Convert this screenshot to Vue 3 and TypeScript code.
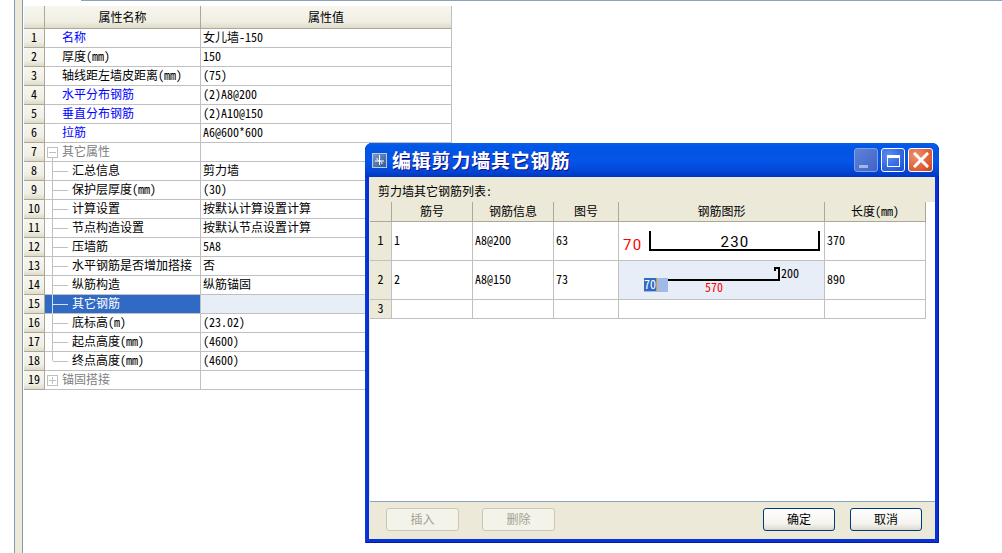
<script setup lang="ts">
interface PropRow {
  name: string
  value: string
  kind?: 'link' | 'group' | 'child'
  collapsed?: boolean
  last?: boolean
  selected?: boolean
}

const rows: PropRow[] = [
  { name: '名称', value: '女儿墙-150', kind: 'link' },
  { name: '厚度(mm)', value: '150' },
  { name: '轴线距左墙皮距离(mm)', value: '(75)' },
  { name: '水平分布钢筋', value: '(2)A8@200', kind: 'link' },
  { name: '垂直分布钢筋', value: '(2)A10@150', kind: 'link' },
  { name: '拉筋', value: 'A6@600*600', kind: 'link' },
  { name: '其它属性', value: '', kind: 'group' },
  { name: '汇总信息', value: '剪力墙', kind: 'child' },
  { name: '保护层厚度(mm)', value: '(30)', kind: 'child' },
  { name: '计算设置', value: '按默认计算设置计算', kind: 'child' },
  { name: '节点构造设置', value: '按默认节点设置计算', kind: 'child' },
  { name: '压墙筋', value: '5A8', kind: 'child' },
  { name: '水平钢筋是否增加搭接', value: '否', kind: 'child' },
  { name: '纵筋构造', value: '纵筋锚固', kind: 'child' },
  { name: '其它钢筋', value: '', kind: 'child', selected: true },
  { name: '底标高(m)', value: '(23.02)', kind: 'child' },
  { name: '起点高度(mm)', value: '(4600)', kind: 'child' },
  { name: '终点高度(mm)', value: '(4600)', kind: 'child', last: true },
  { name: '锚固搭接', value: '', kind: 'group', collapsed: true },
]

const barHeads = ['筋号', '钢筋信息', '图号', '钢筋图形', '长度(mm)']
</script>

<template>
  <div class="page">
    <div class="top-rule" />
    <div class="rail" />

    <section class="props">
      <div class="prop-row prop-head">
        <div class="corner" />
        <div class="head-cell">属性名称</div>
        <div class="head-cell">属性值</div>
      </div>
      <div v-for="(row, i) in rows" :key="i" class="prop-row">
        <div class="index">{{ i + 1 }}</div>
        <div class="name" :class="[row.kind, { selected: row.selected }]">
          <template v-if="row.kind === 'child'">
            <i class="tree-v" :class="{ short: row.last }" />
            <i class="tree-h" />
          </template>
          <svg v-if="row.kind === 'group'" class="toggle" width="11" height="11" viewBox="0 0 11 11">
            <rect x="0.5" y="0.5" width="10" height="10" fill="#fff" stroke="#c0c0c0" />
            <path d="M2 5.5h7" stroke="#c0c0c0" />
            <path v-if="row.collapsed" d="M5.5 2v7" stroke="#c0c0c0" />
          </svg>
          <i v-if="row.kind === 'group' && !row.collapsed" class="tree-stem" />
          <span>{{ row.name }}</span>
        </div>
        <div class="value" :class="{ selected: row.selected }">{{ row.value }}</div>
      </div>
    </section>

    <section class="dialog">
      <header class="titlebar">
        <svg class="app-icon" width="15" height="15" viewBox="0 0 15 15">
          <defs>
            <linearGradient id="icon-fill" x1="0" y1="0" x2="1" y2="1">
              <stop offset="0" stop-color="#7f9cc8" />
              <stop offset="1" stop-color="#2f5596" />
            </linearGradient>
          </defs>
          <rect x="0.5" y="0.5" width="14" height="14" fill="url(#icon-fill)" stroke="#b9cbe6" />
          <path d="M7.5 2v10M3 8h9M5 5c0 2 1 3 2.5 3M10 11c0-2-1-3-2.5-3" fill="none" stroke="#fff" />
        </svg>
        <h1>编辑剪力墙其它钢筋</h1>
        <div class="win-buttons">
          <button class="win-btn off" type="button"><i class="glyph-min" /></button>
          <button class="win-btn" type="button"><i class="glyph-max" /></button>
          <button class="win-btn close" type="button">
            <svg width="16" height="16" viewBox="0 0 16 16">
              <path d="M2 2l12 12M14 2L2 14" stroke="#fff" stroke-width="3" stroke-linecap="square" />
            </svg>
          </button>
        </div>
      </header>

      <div class="client">
        <div class="caption">剪力墙其它钢筋列表:</div>

        <div class="bars">
          <div class="bar-row bar-head">
            <div />
            <div v-for="head in barHeads" :key="head">{{ head }}</div>
          </div>

          <div class="bar-row tall">
            <div class="bar-index">1</div>
            <div class="bar-cell">1</div>
            <div class="bar-cell">A8@200</div>
            <div class="bar-cell">63</div>
            <div class="shape">
              <svg width="205" height="38" viewBox="0 0 205 38">
                <text class="sketch" x="4" y="28" fill="#f00">70</text>
                <path d="M31 9v19h169V9" fill="none" stroke="#000" stroke-width="2" />
                <text class="sketch center" x="116" y="25" fill="#000">230</text>
              </svg>
            </div>
            <div class="bar-cell">370</div>
          </div>

          <div class="bar-row tall">
            <div class="bar-index">2</div>
            <div class="bar-cell">2</div>
            <div class="bar-cell">A8@150</div>
            <div class="bar-cell">73</div>
            <div class="shape active">
              <svg width="205" height="38" viewBox="0 0 205 38">
                <rect x="25" y="17" width="24" height="14" fill="#a0bae8" />
                <rect x="25" y="17" width="12" height="13" fill="#316ac5" />
                <rect x="37" y="17" width="1" height="13" fill="#d8943c" />
                <text class="small" x="25" y="28" fill="#fff">70</text>
                <path d="M49 19h111V7h-4v3" fill="none" stroke="#000" stroke-width="2" />
                <text class="small" x="162" y="17" fill="#000">200</text>
                <text class="small" x="86" y="31" fill="#f00">570</text>
              </svg>
            </div>
            <div class="bar-cell">890</div>
          </div>

          <div class="bar-row">
            <div class="bar-index">3</div>
            <div class="bar-cell" />
            <div class="bar-cell" />
            <div class="bar-cell" />
            <div class="shape" />
            <div class="bar-cell" />
          </div>
        </div>

        <footer class="actions">
          <button class="btn" type="button" disabled>插入</button>
          <button class="btn" type="button" disabled>删除</button>
          <span class="spacer" />
          <button class="btn main" type="button">确定</button>
          <button class="btn main" type="button">取消</button>
        </footer>
      </div>
    </section>
  </div>
</template>

<style>
html,
body {
  margin: 0;
  background: #fff;
}
</style>

<style scoped>
.page {
  position: relative;
  display: flex;
  align-items: flex-start;
  overflow: hidden;
  width: 1002px;
  height: 553px;
  background: #fff;
  color: #000;
  font: 12px/1 "Noto Sans CJK SC", "Liberation Sans", sans-serif;
  font-feature-settings: "hwid";
}

.top-rule {
  position: absolute;
  top: 0;
  left: 81px;
  right: 0;
  height: 1px;
  background: #8aa3bf;
}

.rail {
  flex: none;
  box-sizing: border-box;
  width: 9px;
  height: 553px;
  margin-left: 14px;
  border-right: 1px solid #7f9db9;
  border-left: 1px solid #7f9db9;
  background: #ece9d8;
}

.props {
  flex: none;
  width: 428px;
  margin: 6px 0 0 1px;
}

.prop-row {
  display: grid;
  grid-template-columns: 21px 156px 251px;
  height: 19px;
}

.prop-head {
  height: 23px;
}

.corner,
.head-cell,
.index {
  box-sizing: border-box;
  display: flex;
  align-items: center;
  justify-content: center;
  border-right: 1px solid #aca899;
  border-bottom: 1px solid #aca899;
  padding-bottom: 2px;
  background: linear-gradient(#f7f6ef, #f1efe4 70%, #dedbc9);
}

.head-cell {
  padding-bottom: 1px;
}

.head-cell:last-child {
  border-right-color: #c0c0c0;
}

.name,
.value {
  position: relative;
  box-sizing: border-box;
  display: flex;
  align-items: center;
  border-right: 1px solid #c0c0c0;
  border-bottom: 1px solid #c0c0c0;
  padding-bottom: 2px;
}

.name {
  padding-left: 17px;
}

.value {
  padding-left: 2px;
}

.name.link {
  color: #00f;
}

.name.group {
  color: #808080;
}

.name.child {
  padding-left: 27px;
}

.name.selected {
  background: #316ac5;
  color: #fff;
}

.value.selected {
  background: #e8eef8;
}

.toggle {
  position: absolute;
  top: 4px;
  left: 2px;
}

.tree-stem {
  position: absolute;
  top: 15px;
  left: 7px;
  height: 4px;
  border-left: 1px solid #c0c0c0;
}

.tree-v {
  position: absolute;
  top: 0;
  bottom: -1px;
  left: 7px;
  border-left: 1px solid #c0c0c0;
}

.tree-v.short {
  bottom: 9px;
}

.tree-h {
  position: absolute;
  top: 9px;
  left: 8px;
  width: 15px;
  border-top: 1px solid #c0c0c0;
}

.selected .tree-v,
.selected .tree-h {
  border-color: #d5e0f2;
}

.dialog {
  position: absolute;
  top: 143px;
  left: 365px;
  box-sizing: border-box;
  display: flex;
  flex-direction: column;
  width: 574px;
  height: 400px;
  border-radius: 7px 7px 0 0;
  padding: 0 4px 4px;
  background: #0831d9;
  box-shadow: inset 1px 0 #0a3fd0, inset -1px -1px #001ea0;
}

.titlebar {
  flex: none;
  display: flex;
  align-items: center;
  height: 34px;
  margin: 0 -4px;
  border-radius: 7px 7px 0 0;
  padding: 0 6px 0 7px;
  background: linear-gradient(#0a5fe8 0, #0058e6 3px, #0454e4 10px, #0555ea 18px, #0247d4 28px, #0036c0 34px);
}

.app-icon {
  flex: none;
}

.titlebar h1 {
  flex: 1;
  margin: 0 0 0 5px;
  color: #fff;
  font-size: 19px;
  font-weight: 700;
  line-height: 34px;
  letter-spacing: 0.8px;
  text-shadow: 1px 1px #0f1089;
}

.win-buttons {
  display: flex;
  gap: 3px;
}

.win-btn {
  display: flex;
  align-items: center;
  justify-content: center;
  box-sizing: border-box;
  width: 24px;
  height: 24px;
  border: 1px solid #fff;
  border-radius: 3px;
  padding: 0;
  background: radial-gradient(circle at 30% 30%, #5a8cf2, #2a5fe0 70%, #1a48c8);
}

.win-btn.off {
  border-color: #7f9fe6;
  background: linear-gradient(135deg, #5f82d8, #3f64c8);
}

.win-btn.close {
  width: 25px;
  background: radial-gradient(circle at 30% 30%, #ec9070, #dc5a30 70%, #c04018);
}

.glyph-min {
  width: 9px;
  height: 3px;
  margin-top: 13px;
  margin-right: 5px;
  background: #a4b6e6;
}

.glyph-max {
  box-sizing: border-box;
  width: 13px;
  height: 12px;
  margin-top: 2px;
  border: 1px solid #fff;
  border-top-width: 3px;
}

.client {
  flex: 1;
  display: flex;
  flex-direction: column;
  min-height: 0;
  background: #ece9d8;
}

.caption {
  flex: none;
  height: 25px;
  padding: 8px 0 0 9px;
  box-sizing: border-box;
}

.bars {
  flex: 1;
  margin-left: 1px;
  border-bottom: 1px solid #8da4c0;
  background: #fff;
}

.bar-row {
  display: grid;
  grid-template-columns: 22px 81px 81px 65px 206px 101px;
  width: 556px;
  height: 19px;
}

.bar-row.tall {
  height: 39px;
}

.bar-row > div {
  box-sizing: border-box;
  display: flex;
  align-items: center;
  border-right: 1px solid #c0c0c0;
  border-bottom: 1px solid #c0c0c0;
}

.bar-head {
  height: 20px;
  background: #ece9d8;
}

.bar-row.bar-head > div {
  justify-content: center;
  border-color: #aca899;
  padding-bottom: 2px;
}

.bar-row > .bar-index {
  justify-content: center;
  padding-bottom: 2px;
  background: #ece9d8;
}

.bar-row > .bar-cell {
  padding: 0 0 2px 2px;
}

.active {
  background: #e8eef8;
}

.sketch {
  font: 400 15px Roboto, "Liberation Sans", sans-serif;
  letter-spacing: 1.2px;
}

.center {
  text-anchor: middle;
}

.small {
  font-size: 12px;
}

.actions {
  flex: none;
  display: flex;
  align-items: flex-start;
  gap: 23px;
  box-sizing: border-box;
  height: 37px;
  padding: 6px 13px 0 17px;
}

.spacer {
  flex: 1;
}

.btn {
  box-sizing: border-box;
  width: 73px;
  height: 23px;
  border: 1px solid #003c74;
  border-radius: 3px;
  padding: 0 0 2px;
  background: linear-gradient(#fff, #f4f3ee 70%, #dcd8ce);
  color: #000;
  font: inherit;
  font-feature-settings: inherit;
}

.btn.main {
  width: 72px;
}

.btn.main + .btn.main {
  margin-left: -8px;
}

.btn:disabled {
  border-color: #c9c7ba;
  background: #f4f3ea;
  color: #a1a192;
}
</style>
